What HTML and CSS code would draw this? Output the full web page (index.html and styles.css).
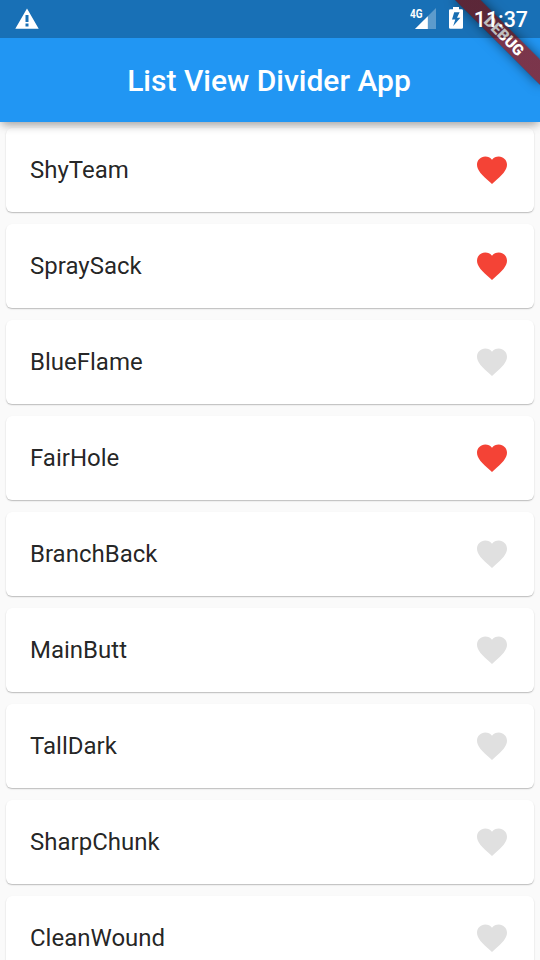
FILE: index.html
```
<!DOCTYPE html>
<html lang="en">
<head>
<meta charset="utf-8">
<title>List View Divider App</title>
<link rel="stylesheet" href="styles.css">
</head>
<body>
<svg width="0" height="0" class="defs"><symbol id="heart" viewBox="0 0 24 24"><path d="M12 21.35l-1.45-1.32C5.4 15.36 2 12.28 2 8.5 2 5.42 4.42 3 7.5 3c1.74 0 3.41.81 4.5 2.09C13.09 3.81 14.76 3 16.5 3 19.58 3 22 5.42 22 8.5c0 3.78-3.4 6.86-8.55 11.54L12 21.35z"/></symbol></svg>
<div class="screen">
  <header class="app-bar">
    <div class="status-bar">
      <svg class="warning" viewBox="0 0 24 22"><path fill-rule="evenodd" d="M12 0.5L23.7 20.8H0.3zM10.5 7v7h3V7zM10.5 15.6v2.8h3v-2.8z"/></svg>
      <div class="status-right">
        <svg class="signal" viewBox="0 0 28 24"><path class="faint" d="M26 2v21H5z"/><path d="M17.8 10.2V23H5z"/><text x="0" y="11.8" textLength="12.5" lengthAdjust="spacingAndGlyphs">4G</text></svg>
        <svg class="battery" viewBox="0 0 14 22"><path fill-rule="evenodd" d="M4 0h6v2.2h2.6Q14 2.2 14 3.6v16.8q0 1.4-1.4 1.4H1.4Q0 21.8 0 20.4V3.6Q0 2.2 1.4 2.2H4zM10.6 5.2H5.2L3 12.6h3.3L4.2 19l7.2-8.2H8z"/></svg>
        <span class="clock">11:37</span>
      </div>
    </div>
    <h1 class="title">List View Divider App</h1>
  </header>
  <main class="list">
    <div class="card"><span>ShyTeam</span><svg class="heart liked"><use href="#heart"/></svg></div>
    <div class="card"><span>SpraySack</span><svg class="heart liked"><use href="#heart"/></svg></div>
    <div class="card"><span>BlueFlame</span><svg class="heart"><use href="#heart"/></svg></div>
    <div class="card"><span>FairHole</span><svg class="heart liked"><use href="#heart"/></svg></div>
    <div class="card"><span>BranchBack</span><svg class="heart"><use href="#heart"/></svg></div>
    <div class="card"><span>MainButt</span><svg class="heart"><use href="#heart"/></svg></div>
    <div class="card"><span>TallDark</span><svg class="heart"><use href="#heart"/></svg></div>
    <div class="card"><span>SharpChunk</span><svg class="heart"><use href="#heart"/></svg></div>
    <div class="card"><span>CleanWound</span><svg class="heart"><use href="#heart"/></svg></div>
  </main>
  <div class="banner-anchor"><div class="banner">DEBUG</div></div>
</div>
</body>
</html>
```
FILE: styles.css
```
* { box-sizing: border-box; }
body { margin: 0; font-family: Roboto, "Liberation Sans", sans-serif; }
.defs { position: absolute; }
.screen {
  position: relative;
  width: 540px;
  height: 960px;
  overflow: hidden;
  display: flex;
  flex-direction: column;
  background: #fafafa;
}
.app-bar {
  position: relative;
  flex: none;
  height: 122px;
  background: #2196f3;
  box-shadow: 0 5px 9px -2px rgba(0,0,0,.3), 0 2px 8px rgba(0,0,0,.08);
}
/* The ribbon sits under the system status bar but over the app bar. */
.status-bar {
  position: relative;
  z-index: 3;
  height: 38px;
  padding: 0 12px 0 15px;
  display: flex;
  align-items: center;
  justify-content: space-between;
  background: rgba(0,0,0,.25);
  fill: #fff;
  color: #fff;
}
.warning { width: 24px; height: 22px; }
.status-right { display: flex; align-items: center; }
.signal { width: 28px; height: 24px; margin-right: 11px; margin-bottom: 2px; }
.signal text { font-size: 12.2px; font-weight: 700; }
.faint { opacity: .3; }
.battery { width: 14px; height: 22px; margin-right: 11px; margin-bottom: 2px; }
.clock { font-size: 21.4px; font-weight: 500; line-height: 38px; padding-top: 1px; }
.title {
  margin: 0;
  height: 84px;
  padding-right: 2px;
  line-height: 85px;
  text-align: center;
  color: #fff;
  font-size: 30px;
  font-weight: 500;
}
.list { padding: 6px 6px 0; display: flex; flex-direction: column; gap: 12px; }
.card {
  flex: none;
  height: 84px;
  padding: 0 24px;
  display: flex;
  align-items: center;
  justify-content: space-between;
  border-radius: 6px;
  background: #fff;
  box-shadow: 0 1px 1px rgba(0,0,0,.15), 0 1px 2px rgba(0,0,0,.12);
  color: rgba(0,0,0,.87);
  font-size: 24px;
}
.heart { width: 36px; height: 36px; fill: #e0e0e0; }
.liked { fill: #f44336; }
.banner-anchor {
  position: absolute;
  z-index: 2;
  top: 0;
  right: 0;
  width: 0;
  height: 0;
  transform: rotate(45deg);
}
.banner {
  position: absolute;
  left: -60px;
  top: 42px;
  width: 120px;
  height: 18px;
  line-height: 18px;
  text-align: center;
  background: linear-gradient(rgba(183,28,28,.627), rgba(183,28,28,.627)) rgba(0,0,0,.36);
  box-shadow: 0 0 12px rgba(0,0,0,.5);
  color: #fff;
  font-size: 15.3px;
  font-weight: 900;
}
```
